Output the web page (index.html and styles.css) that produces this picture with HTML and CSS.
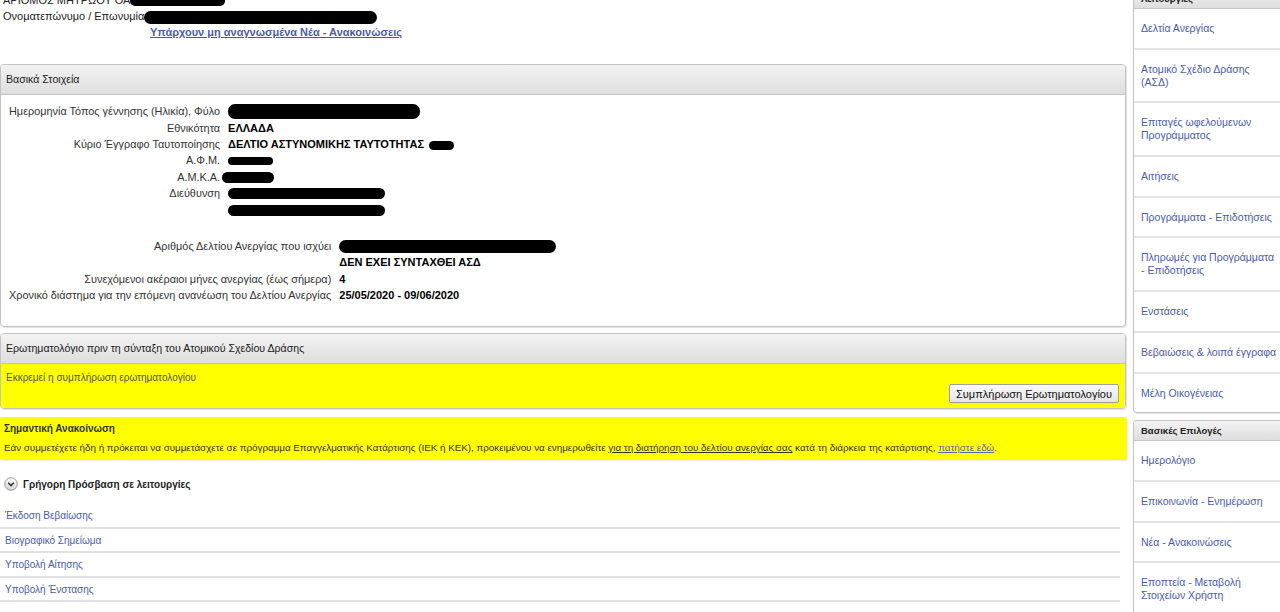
FILE: index.html
```html
<!DOCTYPE html>
<html lang="el">
<head>
    <meta charset="UTF-8">
    <title>Προσωπικά Στοιχεία</title>
    <link rel="stylesheet" href="styles.css">
</head>
<body>
<div class="page">
    <main class="main">
        <div class="top-info">
            <div class="info-line">ΑΡΙΘΜΟΣ ΜΗΤΡΩΟΥ ΟΑ<span class="redact r-amo"></span></div>
            <div class="info-line">Ονοματεπώνυμο / Επωνυμία<span class="redact r-name"></span></div>
            <a href="#" class="news-link">Υπάρχουν μη αναγνωσμένα Νέα - Ανακοινώσεις</a>
        </div>

        <section class="panel">
            <div class="panel-head">Βασικά Στοιχεία</div>
            <div class="panel-body details-body">
                <table class="details">
                    <tr><td class="lbl">Ημερομηνία Τόπος γέννησης (Ηλικία), Φύλο</td><td class="val"><span class="redact r-birth"></span></td></tr>
                    <tr><td class="lbl">Εθνικότητα</td><td class="val">ΕΛΛΑΔΑ</td></tr>
                    <tr><td class="lbl">Κύριο Έγγραφο Ταυτοποίησης</td><td class="val">ΔΕΛΤΙΟ ΑΣΤΥΝΟΜΙΚΗΣ ΤΑΥΤΟΤΗΤΑΣ <span class="redact r-id"></span></td></tr>
                    <tr><td class="lbl">Α.Φ.Μ.</td><td class="val"><span class="redact r-afm"></span></td></tr>
                    <tr><td class="lbl">Α.Μ.Κ.Α.</td><td class="val"><span class="redact r-amka"></span></td></tr>
                    <tr><td class="lbl">Διεύθυνση</td><td class="val"><span class="redact r-addr"></span></td></tr>
                    <tr><td class="lbl"></td><td class="val"><span class="redact r-addr"></span></td></tr>
                </table>
                <table class="details second">
                    <tr><td class="lbl">Αριθμός Δελτίου Ανεργίας που ισχύει</td><td class="val"><span class="redact r-card"></span></td></tr>
                    <tr><td class="lbl"></td><td class="val">ΔΕΝ ΕΧΕΙ ΣΥΝΤΑΧΘΕΙ ΑΣΔ</td></tr>
                    <tr><td class="lbl">Συνεχόμενοι ακέραιοι μήνες ανεργίας (έως σήμερα)</td><td class="val">4</td></tr>
                    <tr><td class="lbl">Χρονικό διάστημα για την επόμενη ανανέωση του Δελτίου Ανεργίας</td><td class="val">25/05/2020 - 09/06/2020</td></tr>
                </table>
            </div>
        </section>

        <section class="panel quest">
            <div class="panel-head">Ερωτηματολόγιο πριν τη σύνταξη του Ατομικού Σχεδίου Δράσης</div>
            <div class="panel-body quest-body">
                <div class="pending">Εκκρεμεί η συμπλήρωση ερωτηματολογίου</div>
                <div class="btn-row"><button class="btn">Συμπλήρωση Ερωτηματολογίου</button></div>
            </div>
        </section>

        <div class="notice">
            <div class="notice-title">Σημαντική Ανακοίνωση</div>
            <div class="notice-text">Εάν συμμετέχετε ήδη ή πρόκειται να συμμετάσχετε σε πρόγραμμα Επαγγελματικής Κατάρτισης (ΙΕΚ ή ΚΕΚ), προκειμένου να ενημερωθείτε <a href="#" class="dark-link">για τη διατήρηση του δελτίου ανεργίας σας</a> κατά τη διάρκεια της κατάρτισης, <a href="#" class="here-link">πατήστε εδώ</a>.</div>
        </div>

        <div class="quick">
            <div class="quick-head">
                <svg class="chev" width="14" height="14" viewBox="0 0 14 14">
                    <defs>
                        <linearGradient id="cg" x1="0" y1="0" x2="0" y2="1">
                            <stop offset="0" stop-color="#fafafa"/>
                            <stop offset="1" stop-color="#d6d6d6"/>
                        </linearGradient>
                    </defs>
                    <circle cx="7" cy="7" r="6.3" fill="url(#cg)" stroke="#9a9a9a" stroke-width="1"/>
                    <polyline points="4.2,5.8 7,8.6 9.8,5.8" fill="none" stroke="#333" stroke-width="1.6"/>
                </svg>
                <span>Γρήγορη Πρόσβαση σε λειτουργίες</span>
            </div>
            <ul class="quick-list">
                <li><a href="#">Έκδοση Βεβαίωσης</a></li>
                <li><a href="#">Βιογραφικό Σημείωμα</a></li>
                <li><a href="#">Υποβολή Αίτησης</a></li>
                <li><a href="#">Υποβολή Ένστασης</a></li>
            </ul>
        </div>
    </main>

    <aside class="sidebar">
        <div class="side-panel">
            <div class="side-head">Λειτουργίες</div>
            <ul class="side-list">
                <li><a href="#">Δελτία Ανεργίας</a></li>
                <li><a href="#">Ατομικό Σχέδιο Δράσης (ΑΣΔ)</a></li>
                <li><a href="#">Επιταγές ωφελούμενων Προγράμματος</a></li>
                <li><a href="#">Αιτήσεις</a></li>
                <li><a href="#">Προγράμματα - Επιδοτήσεις</a></li>
                <li><a href="#">Πληρωμές για Προγράμματα - Επιδοτήσεις</a></li>
                <li><a href="#">Ενστάσεις</a></li>
                <li><a href="#">Βεβαιώσεις &amp; λοιπά έγγραφα</a></li>
                <li><a href="#">Μέλη Οικογένειας</a></li>
            </ul>
        </div>
        <div class="side-panel">
            <div class="side-head">Βασικές Επιλογές</div>
            <ul class="side-list">
                <li><a href="#">Ημερολόγιο</a></li>
                <li><a href="#">Επικοινωνία - Ενημέρωση</a></li>
                <li><a href="#">Νέα - Ανακοινώσεις</a></li>
                <li><a href="#">Εποπτεία - Μεταβολή Στοιχείων Χρήστη</a></li>
            </ul>
        </div>
    </aside>
</div>
</body>
</html>
```

FILE: styles.css
```css
* {
    margin: 0;
    padding: 0;
    box-sizing: border-box;
}

html, body {
    height: 100%;
    overflow: hidden;
}

body {
    font-family: "Liberation Sans", Arial, sans-serif;
    font-size: 11px;
    color: #333;
    background: #fff;
}

a {
    color: #4a5ca8;
    text-decoration: none;
}

ul {
    list-style: none;
}

.page {
    display: flex;
    align-items: flex-start;
    gap: 6px;
    margin-top: -10px;
}

.main {
    width: 1127px;
    flex-shrink: 0;
    padding-top: 2px;
}

.sidebar {
    width: 150px;
    flex-shrink: 0;
    margin-top: -2px;
}

/* black marker over personal data */
.redact {
    display: inline-block;
    height: 12px;
    background: #000;
    border-radius: 7px;
    vertical-align: middle;
}

.r-amo { width: 95px; height: 10px; }
.r-name { width: 233px; height: 13px; }
.r-birth { width: 192px; height: 15px; }
.r-id { width: 25px; height: 9px; margin-left: 2px; }
.r-afm { width: 45px; height: 8px; }
.r-amka { width: 52px; height: 11px; margin-left: -6px; }
.r-addr { width: 157px; height: 11px; }
.r-card { width: 217px; height: 13px; }

/* top */
.top-info {
    padding-left: 3px;
    color: #222;
}

.info-line {
    line-height: 16px;
}

.news-link {
    display: block;
    margin-left: 147px;
    line-height: 17px;
    font-weight: bold;
    text-decoration: underline;
}

/* panels */
.panel {
    border: 1px solid #c3c3c3;
    border-radius: 4px;
    box-shadow: 1px 1px 1px rgba(0, 0, 0, 0.12);
    margin-top: 23px;
    margin-right: 1px;
    overflow: hidden;
}

.panel-head {
    height: 30px;
    line-height: 29px;
    padding-left: 5px;
    font-size: 10.6px;
    color: #222;
    background: linear-gradient(#f3f3f3, #dedede);
    border-bottom: 1px solid #c3c3c3;
}

.details-body {
    padding: 8px 4px 23px;
}

.details {
    border-collapse: collapse;
}

.details td {
    padding: 0 4px;
    height: 16.4px;
    white-space: nowrap;
}

.details .lbl {
    text-align: right;
    font-size: 10.9px;
    color: #333;
}

.details .val {
    font-weight: bold;
    color: #000;
}

.details.second {
    margin-top: 20px;
}

.quest {
    margin-top: 6px;
}

.quest-body {
    background: #ffff00;
    padding: 7px 6px 5px 5px;
}

.pending {
    color: #555;
    font-size: 10px;
    line-height: 13px;
}

.btn-row {
    display: flex;
    justify-content: flex-end;
}

.btn {
    font-family: "Liberation Sans", Arial, sans-serif;
    font-size: 11px;
    color: #111;
    height: 19px;
    padding: 0 6px;
    background: linear-gradient(#fafafa, #e5e5e5);
    border: 1px solid #9e9e9e;
    border-radius: 2px;
}

/* announcement */
.notice {
    margin-top: 8px;
    background: #ffff00;
    border-radius: 2px;
    padding: 4px 4px 5px;
    box-shadow: 1px 1px 1px rgba(0, 0, 0, 0.08);
}

.notice-title {
    font-weight: bold;
    font-size: 10px;
    color: #333;
    line-height: 15px;
}

.notice-text {
    margin-top: 4px;
    color: #333;
    line-height: 15px;
    font-size: 9.8px;
}

.dark-link {
    color: #333;
    text-decoration: underline;
}

.here-link {
    color: #5d69ad;
    text-decoration: underline;
}

/* quick access */
.quick {
    margin-top: 16px;
    width: 1120px;
}

.quick-head {
    display: flex;
    align-items: center;
    gap: 5px;
    padding-left: 4px;
    font-weight: bold;
    font-size: 10px;
    color: #222;
    height: 16px;
}

.chev {
    flex-shrink: 0;
}

.quick-list {
    margin-top: 12px;
}

.quick-list li {
    padding: 5px 5px 4.5px;
    line-height: 13px;
    border-bottom: 2px solid #e2e2e2;
    font-size: 10px;
}

/* sidebar */
.side-panel {
    border: 1px solid #c3c3c3;
    border-right: none;
    border-radius: 4px 0 0 4px;
    box-shadow: 1px 1px 1px rgba(0, 0, 0, 0.12);
    margin-bottom: 7px;
    overflow: hidden;
}

.side-head {
    height: 20px;
    line-height: 20px;
    padding-left: 7px;
    font-weight: bold;
    font-size: 9.5px;
    color: #222;
    background: linear-gradient(#f3f3f3, #dedede);
    border-bottom: 1px solid #c8c8c8;
}

.side-list li {
    padding: 13px 5px 12.7px 7px;
    line-height: 13px;
    font-size: 10.5px;
    border-bottom: 2px solid #e4e4e4;
}

.side-list li:last-child {
    border-bottom: none;
}
```
